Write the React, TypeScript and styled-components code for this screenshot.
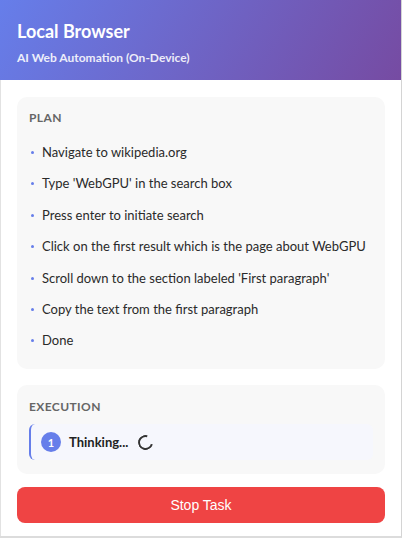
import React from 'react';
import styled, { createGlobalStyle, keyframes } from 'styled-components';

// ── global ─────────────────────────────────────────────
const GlobalStyle = createGlobalStyle`
  html, body { margin: 0; padding: 0; background: #ffffff; }
  body { font-family: Lato, "Noto Sans", sans-serif; color: #222; }
  * { box-sizing: border-box; }
`;

// ── styles ─────────────────────────────────────────────
const Shell = styled.div`
  width: 402px;
  height: 538px;
  border-right: 1px solid #d4d4d4;
  border-bottom: 2px solid #dcdcdc;
  display: flex; flex-direction: column;
  background: #fff;
`;

const Header = styled.header`
  height: 80px;
  padding: 19px 17px 0;
  background: linear-gradient(120deg, #667eea 0%, #764ba2 100%);
  color: #fff;
  h1 { margin: 0; font-size: 18px; font-weight: 700; line-height: 24px; }
  p { margin: 7px 0 0; font-size: 12px; font-weight: 700; line-height: 16px; opacity: 0.88; }
`;

const Body = styled.main`
  flex: 1;
  border-left: 1px solid #e2e2e2;
  padding: 17px 16px 0;
  display: flex; flex-direction: column; gap: 16px;
`;

const Card = styled.section<{ $pad?: string }>`
  background: #f8f8f8;
  border-radius: 10px;
  padding: ${({ $pad }) => $pad ?? '13px 12px 19px'};
`;

const Label = styled.h2`
  margin: 0;
  font-size: 12px; font-weight: 700;
  letter-spacing: 0.4px;
  color: #666;
  line-height: 16px;
  text-transform: uppercase;
`;

const PlanList = styled.ul`
  list-style: none;
  margin: 16px 0 0; padding: 0;
  display: flex; flex-direction: column; gap: 11.4px;
`;

const PlanItem = styled.li`
  position: relative;
  padding-left: 13px;
  font-size: 13px; line-height: 20px;
  color: #2a2a2a;
  &::before {
    content: '';
    position: absolute; left: 2px; top: 9px;
    width: 3px; height: 3px; border-radius: 50%;
    background: #667eea;
  }
`;

const StepRow = styled.div`
  margin-top: 9px;
  display: flex; align-items: center; gap: 8px;
  height: 36px;
  padding: 0 10px;
  background: #f6f7fd;
  border-left: 2px solid #667eea;
  border-radius: 6px;
`;

const StepBadge = styled.span`
  width: 20px; height: 20px; border-radius: 50%;
  background: #667eea; color: #fff;
  font-size: 11px; font-weight: 700;
  display: flex; align-items: center; justify-content: center;
`;

const StepText = styled.span`
  font-size: 13px; font-weight: 700; color: #222;
  line-height: 20px;
`;

const spin = keyframes`to { transform: rotate(360deg); }`;

const Spinner = styled.span`
  width: 15px; height: 15px; margin-left: 2px;
  border: 2px solid #333;
  border-right-color: transparent;
  border-radius: 50%;
  transform: rotate(-30deg);
  animation: ${spin} 1s linear infinite paused;
`;

const StopButton = styled.button`
  height: 36px; width: 100%;
  margin-top: -3px;
  border: none; border-radius: 8px;
  background: #ef4444; color: #fff;
  font-family: "Liberation Sans", Arial, sans-serif;
  font-size: 14px;
  cursor: pointer;
`;

// ── data ─────────────────────────────────────────────
const PLAN = [
  'Navigate to wikipedia.org',
  "Type 'WebGPU' in the search box",
  'Press enter to initiate search',
  'Click on the first result which is the page about WebGPU',
  "Scroll down to the section labeled 'First paragraph'",
  'Copy the text from the first paragraph',
  'Done',
];

export default function App() {
  return (
    <>
      <GlobalStyle />
      <Shell>
        <Header>
          <h1>Local Browser</h1>
          <p>AI Web Automation (On-Device)</p>
        </Header>
        <Body>
          <Card>
            <Label>Plan</Label>
            <PlanList>
              {PLAN.map((step) => (
                <PlanItem key={step}>{step}</PlanItem>
              ))}
            </PlanList>
          </Card>
          <Card $pad="14px 12px 14px">
            <Label>Execution</Label>
            <StepRow>
              <StepBadge>1</StepBadge>
              <StepText>Thinking...</StepText>
              <Spinner />
            </StepRow>
          </Card>
          <StopButton>Stop Task</StopButton>
        </Body>
      </Shell>
    </>
  );
}
